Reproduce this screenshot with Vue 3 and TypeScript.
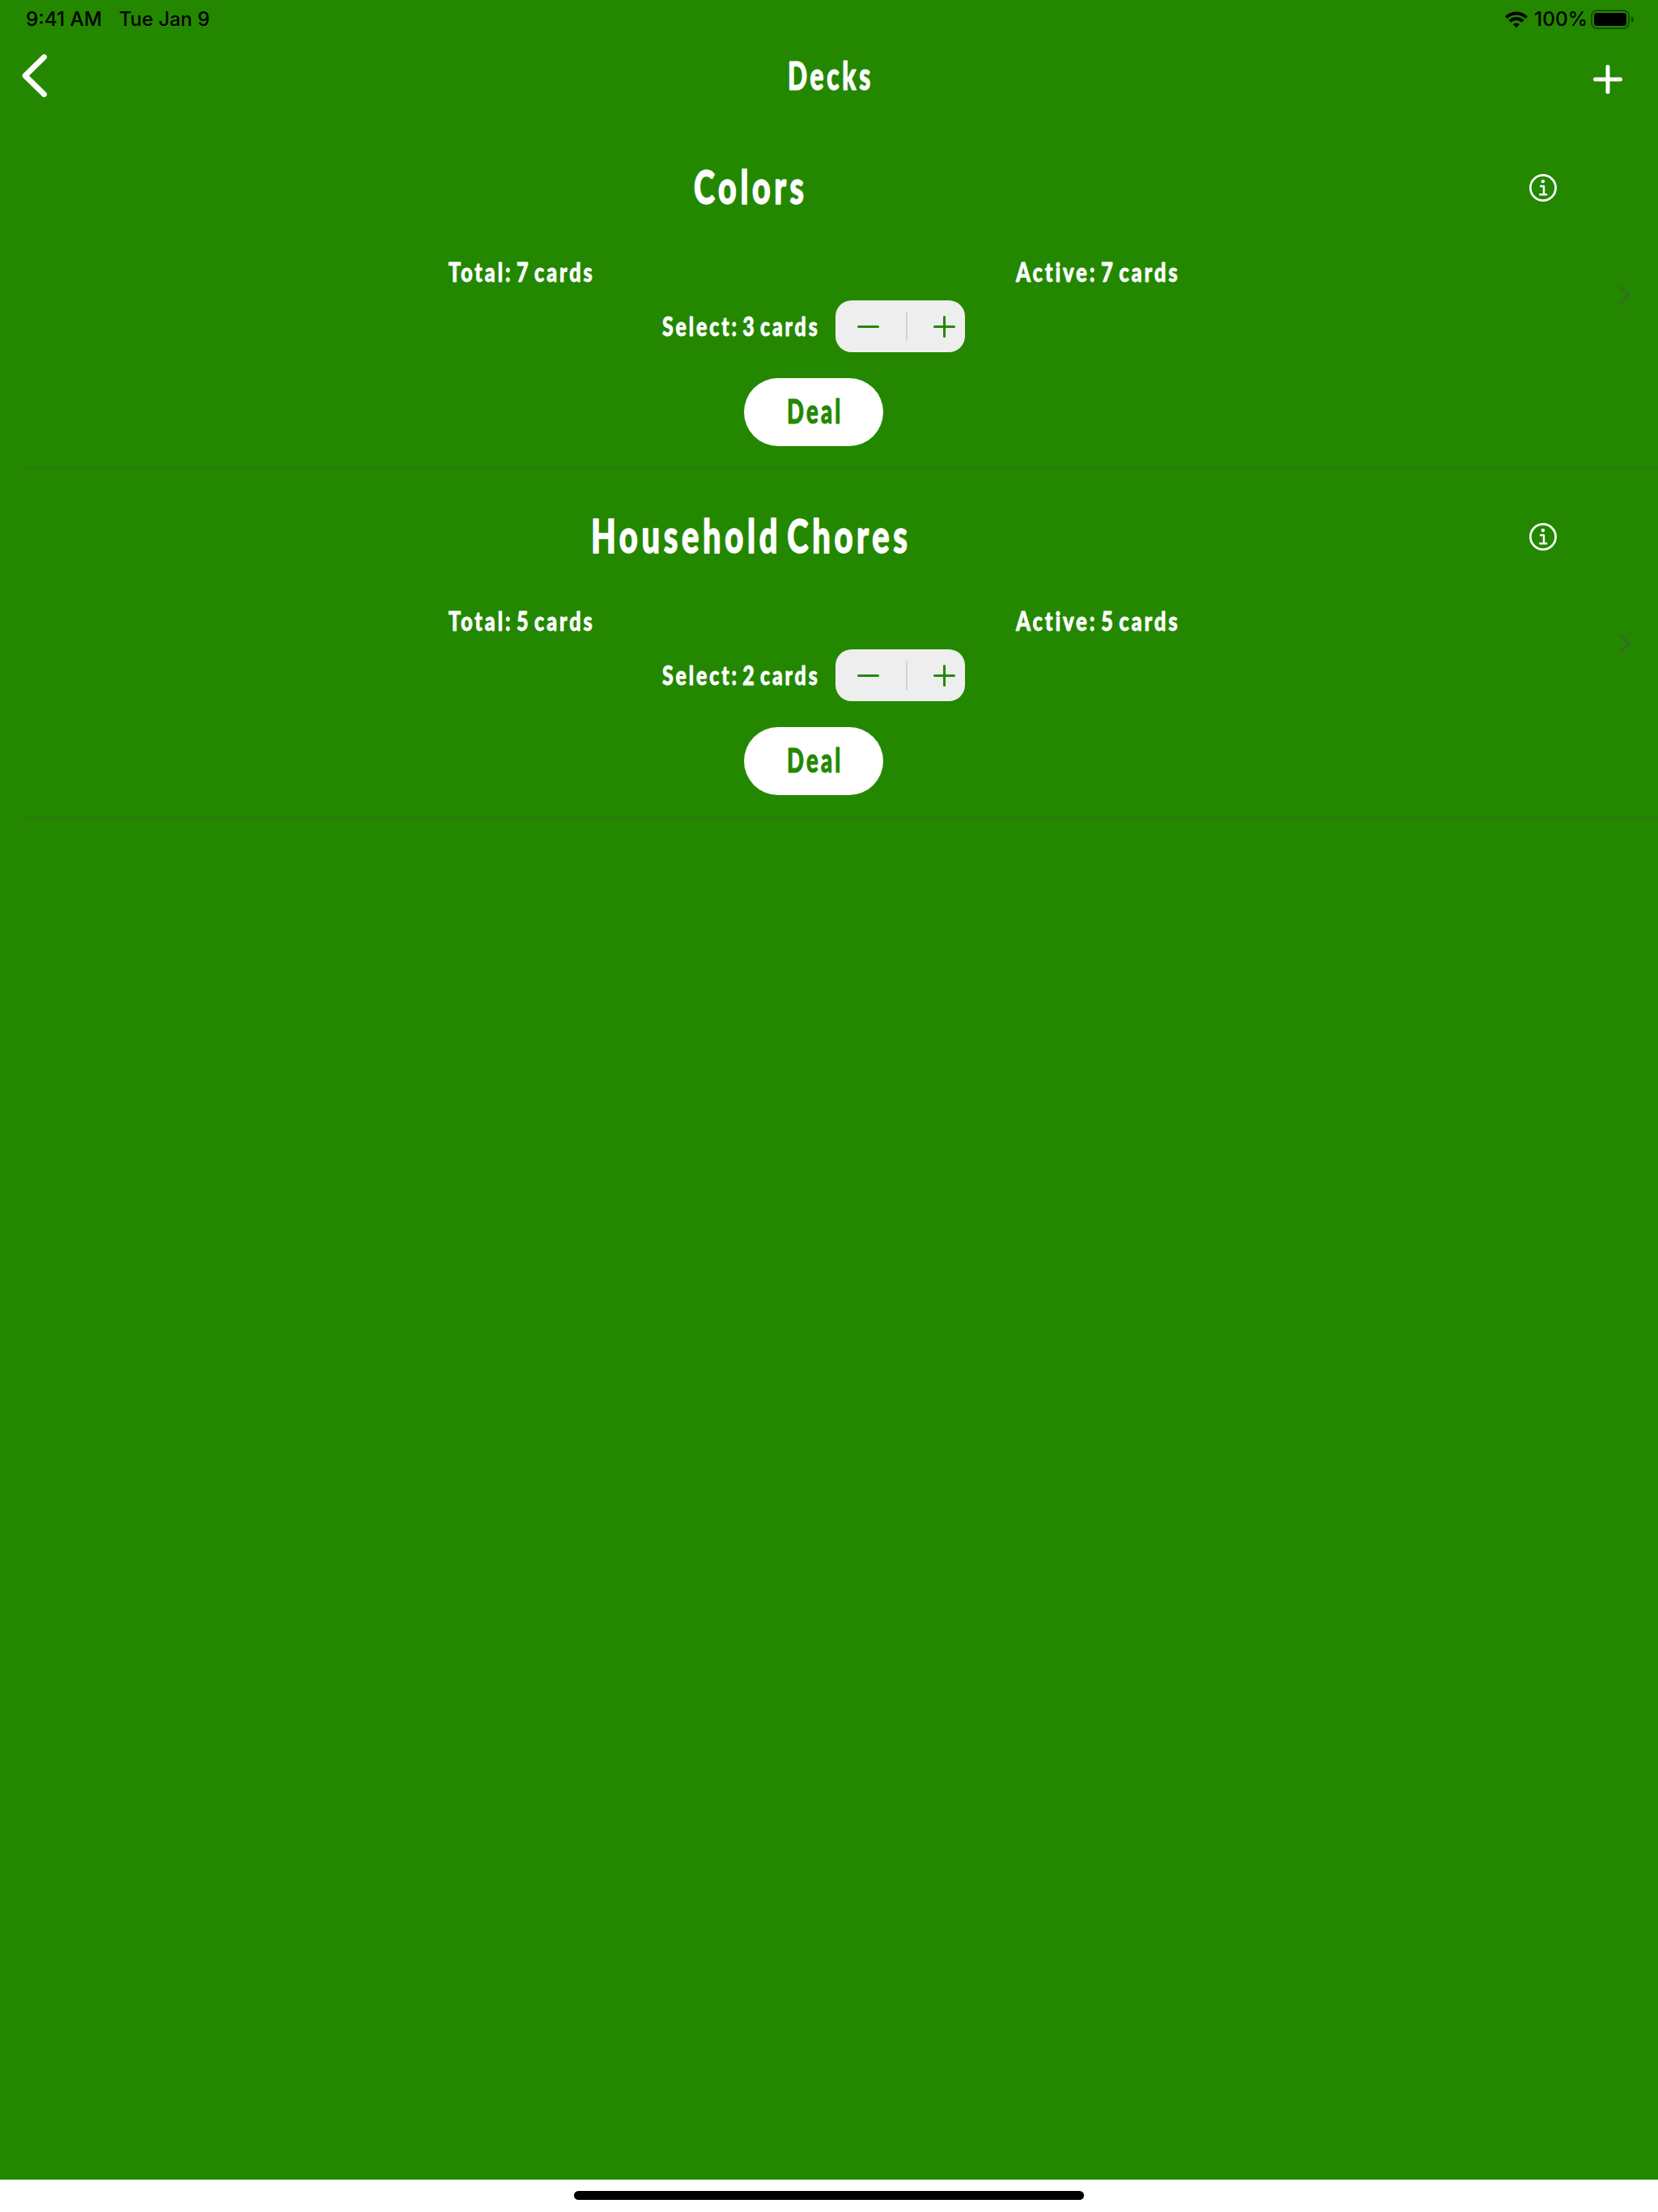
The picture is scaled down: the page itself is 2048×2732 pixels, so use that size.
<script setup lang="ts">
import { h, ref, type FunctionalComponent } from 'vue'

interface Deck {
  name: string
  titleWidth: number
  total: number
  active: number
  selected: number
}

const decks = ref<Deck[]>([
  { name: 'Colors', titleWidth: 136, total: 7, active: 7, selected: 3 },
  { name: 'Household Chores', titleWidth: 391, total: 5, active: 5, selected: 2 },
])

function step(deck: Deck, by: number) {
  deck.selected = Math.min(deck.active, Math.max(1, deck.selected + by))
}

// Condensed hand-lettered label: glyphs are fitted to a fixed width.
const Marker: FunctionalComponent<{ text: string; width: number; cap: number; plain?: boolean }> = (props) => {
  const gap = props.plain ? 0 : props.cap * 0.16
  return h(
    'svg',
    { class: 'marker', width: props.width, height: props.cap, 'aria-label': props.text },
    h(
      'text',
      {
        x: 0,
        y: props.cap,
        'font-size': props.cap / 0.72,
        'letter-spacing': gap,
        'word-spacing': -gap * 1.5,
        'stroke-width': props.cap * 0.035,
        textLength: props.width + gap * 0.7,
        lengthAdjust: 'spacingAndGlyphs',
      },
      props.text,
    ),
  )
}
Marker.props = ['text', 'width', 'cap', 'plain']
</script>

<template>
  <div class="screen">
    <header class="status">
      <Marker class="system time" text="9:41 AM" :width="94" :cap="17" :plain="true" />
      <Marker class="system date" text="Tue Jan 9" :width="112" :cap="17" :plain="true" />
      <span class="grow"></span>
      <svg class="wifi" width="28" height="21" viewBox="0 0 28 21">
        <g fill="none" stroke="#000" stroke-width="4">
          <path d="M1.4 7.6a18.2 18.2 0 0 1 25.2 0" />
          <path d="M5.9 12.3a11.6 11.6 0 0 1 16.2 0" />
        </g>
        <path d="M14 20.2l-4-4.1a5.8 5.8 0 0 1 8 0z" />
      </svg>
      <Marker class="system percent" text="100%" :width="66" :cap="17" :plain="true" />
      <svg class="battery" width="53" height="24" viewBox="0 0 53 24">
        <rect x="1" y="1" width="46" height="22" rx="6.5" fill="none" stroke="#000" stroke-opacity=".4" stroke-width="2" />
        <rect x="4" y="4" width="40" height="16" rx="3.5" />
        <path d="M50 8c4 1.500 4 6.500 0 8z" fill-opacity=".45" />
      </svg>
    </header>

    <nav class="nav">
      <svg class="back" width="31" height="53" viewBox="0 0 31 53">
        <path d="M27.500 3.500L4 26.500l23.500 23" fill="none" stroke="#fff" stroke-width="6.800" stroke-linecap="round" stroke-linejoin="round" />
      </svg>
      <Marker text="Decks" :width="102" :cap="34" />
      <svg class="add" width="36" height="36" viewBox="0 0 36 36">
        <path d="M18 2.500v31M2.500 18h31" stroke="#fff" stroke-width="5" stroke-linecap="round" />
      </svg>
    </nav>

    <main class="list">
      <section v-for="deck in decks" :key="deck.name" class="row">
        <div class="body">
          <div class="heading">
            <div class="title"><Marker :text="deck.name" :width="deck.titleWidth" :cap="41" /></div>
            <svg class="info" width="34" height="34" viewBox="0 0 34 34">
              <circle cx="17" cy="17" r="15.600" fill="none" stroke="#fff" stroke-width="2.700" />
              <circle cx="16.900" cy="9" r="2.200" fill="#fff" />
              <path d="M14 15h4v10.200M13.200 25.200h8" fill="none" stroke="#fff" stroke-width="2.400" stroke-linecap="round" stroke-linejoin="round" />
            </svg>
          </div>
          <div class="counts">
            <Marker :text="`Total: ${deck.total} cards`" :width="178" :cap="23" />
            <Marker :text="`Active: ${deck.active} cards`" :width="200" :cap="23" />
          </div>
          <div class="select">
            <Marker :text="`Select: ${deck.selected} cards`" :width="192" :cap="23" />
            <div class="stepper">
              <button class="minus" aria-label="Decrease" @click="step(deck, -1)">
                <svg width="27" height="27" viewBox="0 0 27 27"><path d="M1.500 13.500h24" /></svg>
              </button>
              <i class="divider"></i>
              <button class="plus" aria-label="Increase" @click="step(deck, 1)">
                <svg width="27" height="27" viewBox="0 0 27 27"><path d="M1.500 13.500h24M13.500 1.500v24" /></svg>
              </button>
            </div>
          </div>
          <button class="deal"><Marker text="Deal" :width="66" :cap="30" /></button>
        </div>
        <svg class="chevron" width="15" height="24" viewBox="0 0 15 24">
          <path d="M2.200 2.200L12 12l-9.800 9.800" fill="none" stroke="#2f731c" stroke-width="4" stroke-linecap="round" stroke-linejoin="round" />
        </svg>
      </section>
    </main>

    <footer class="home"><i></i></footer>
  </div>
</template>

<style>
body {
  margin: 0;
}
</style>

<style scoped>
.screen {
  width: 2048px;
  height: 2732px;
  display: flex;
  flex-direction: column;
  background: #238800;
}
.marker {
  display: block;
  flex: none;
  overflow: visible;
  font-family: Lato, "Open Sans", sans-serif;
  font-weight: 900;
  fill: #fff;
  stroke: #fff;
  stroke-linejoin: round;
}
.marker.system {
  font-family: Inter, "Liberation Sans", sans-serif;
  font-weight: 450;
  fill: #000;
  stroke: none;
}
.status {
  box-sizing: border-box;
  height: 48px;
  padding: 0 30px 0 32px;
  display: flex;
  align-items: center;
}
.status .marker {
  margin-top: -1px;
}
.status .date {
  margin-left: 21px;
}
.grow {
  flex: 1;
}
.status .percent {
  margin: -1px 4px 0 8px;
}
.nav {
  box-sizing: border-box;
  height: 100px;
  padding: 19px 44px 0 27px;
  display: grid;
  grid-template-columns: 1fr auto 1fr;
  align-items: start;
}
.nav .marker {
  margin: 10px 0 0 17px;
}
.add {
  justify-self: end;
  margin-top: 13px;
}
.list {
  flex: 1;
}
.row {
  height: 431px;
  display: flex;
  align-items: center;
  background: linear-gradient(#316a22, #316a22) 32px 430px / 2016px 1px no-repeat;
}
.body {
  width: 1978px;
  height: 431px;
  box-sizing: border-box;
  padding: 62px 0 0 32px;
  display: flex;
  flex-direction: column;
}
.heading {
  height: 114px;
  display: flex;
  align-items: flex-start;
}
.title {
  width: 1786px;
  margin-top: 1px;
  display: flex;
  justify-content: center;
}
.info {
  margin: 5px 0 0 71px;
}
.counts {
  height: 47px;
  display: grid;
  grid-template-columns: 1222px 1fr;
}
.counts .marker {
  margin: 1px 0 0 522px;
}
.counts .marker:last-child {
  margin-left: 1px;
}
.select {
  height: 64px;
  margin-left: 786px;
  display: flex;
  align-items: center;
  gap: 22px;
}
.stepper {
  width: 160px;
  height: 64px;
  border-radius: 20px;
  background: #eee;
  display: flex;
  align-items: center;
}
button {
  border: 0;
  padding: 0;
  background: none;
  display: flex;
  align-items: center;
}
.stepper svg {
  stroke: #238800;
  stroke-width: 3;
  stroke-linecap: round;
}
.minus {
  width: 87px;
  padding-left: 27px;
}
.divider {
  width: 2px;
  height: 36px;
  background: #d3d3d4;
}
.plus {
  padding-left: 32px;
}
.deal {
  width: 172px;
  height: 84px;
  margin: 32px 0 0 887px;
  border-radius: 42px;
  background: #fff;
  justify-content: center;
}
.deal .marker {
  margin: -3px 0 0 0;
  fill: #238800;
  stroke: #238800;
}
.chevron {
  margin-left: 22px;
}
.home {
  height: 40px;
  background: #fff;
  display: flex;
  justify-content: center;
  align-items: flex-start;
}
.home i {
  width: 630px;
  height: 11px;
  margin-top: 14px;
  border-radius: 6px;
  background: #000;
}
</style>
